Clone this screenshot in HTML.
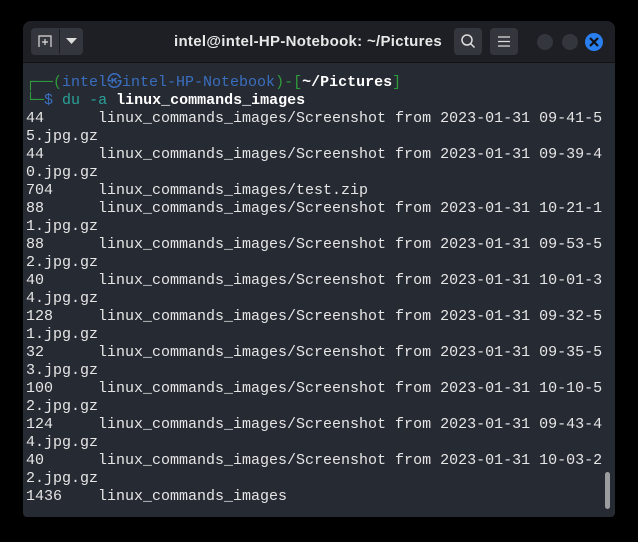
<!DOCTYPE html>
<html><head><style>
body{margin:0;width:638px;height:542px;background:#000;position:relative;overflow:hidden;font-family:"Liberation Sans",sans-serif}
.win{position:absolute;left:23px;top:21px;width:592px;height:496px;background:#262a33;border-radius:8px 8px 4px 4px;overflow:hidden}
.tb{position:absolute;left:0;top:0;width:592px;height:41px;background:#1d1f24;border-bottom:1px solid #111}
.btn{position:absolute;top:7px;height:27px;background:#33363d;border-radius:4px}
.title{position:absolute;left:151px;top:12px;color:#e8e8e8;font-weight:bold;font-size:15px;white-space:nowrap;letter-spacing:0.3px}
.dot{position:absolute;top:13px;width:16px;height:16px;border-radius:50%;background:#33363d}
pre{position:absolute;left:3px;top:53px;margin:0;font-family:"Liberation Mono",monospace;font-size:15px;line-height:18px;color:#e6e6e6}
.g{color:#2f9c3c}.b{color:#3a6fc0}.w{color:#fff;font-weight:bold}.t{color:#2aa198}
.sb{position:absolute;left:582px;top:451px;width:5px;height:37px;background:#9a9ca0;border-radius:3px}
</style></head><body>
<div class="win">
<div class="tb">
<div class="btn" style="left:8px;width:52px"></div>
<div style="position:absolute;left:36px;top:8px;width:1px;height:25px;background:#1d1f24"></div>
<svg style="position:absolute;left:15px;top:13px" width="16" height="14"><path d="M1 13V2h12v11" fill="none" stroke="#ddd" stroke-width="1.2"/><path d="M7 5v6M4 8h6" stroke="#ddd" stroke-width="1.2"/></svg>
<svg style="position:absolute;left:43px;top:17px" width="12" height="7"><path d="M0 0h11L5.5 6z" fill="#ddd"/></svg>
<div class="title">intel@intel-HP-Notebook: ~/Pictures</div>
<div class="btn" style="left:431px;width:28px"></div>
<svg style="position:absolute;left:437px;top:12px" width="16" height="16"><circle cx="7" cy="7" r="5" fill="none" stroke="#ddd" stroke-width="1.5"/><path d="M10.5 10.5l4 4" stroke="#ddd" stroke-width="1.5"/></svg>
<div class="btn" style="left:467px;width:28px"></div>
<svg style="position:absolute;left:475px;top:15px" width="12" height="11"><path d="M0 1h12M0 5.5h12M0 10h12" stroke="#ddd" stroke-width="1.3"/></svg>
<div class="dot" style="left:514px"></div>
<div class="dot" style="left:539px"></div>
<div class="dot" style="left:562px;background:#2a7ff0;width:18px;height:18px;top:12px"></div>
<svg style="position:absolute;left:566px;top:16px" width="10" height="10"><path d="M1 1l8 8M9 1l-8 8" stroke="#111" stroke-width="2.2"/></svg>
</div>
<pre><span class="g">┌──(</span><span class="b">intel㉿intel-HP-Notebook</span><span class="g">)-[</span><span class="w">~/Pictures</span><span class="g">]</span>
<span class="g">└─</span><span class="b">$</span> <span class="t">du</span> <span class="t">-a</span> <span class="w">linux_commands_images</span>
44      linux_commands_images/Screenshot from 2023-01-31 09-41-5
5.jpg.gz
44      linux_commands_images/Screenshot from 2023-01-31 09-39-4
0.jpg.gz
704     linux_commands_images/test.zip
88      linux_commands_images/Screenshot from 2023-01-31 10-21-1
1.jpg.gz
88      linux_commands_images/Screenshot from 2023-01-31 09-53-5
2.jpg.gz
40      linux_commands_images/Screenshot from 2023-01-31 10-01-3
4.jpg.gz
128     linux_commands_images/Screenshot from 2023-01-31 09-32-5
1.jpg.gz
32      linux_commands_images/Screenshot from 2023-01-31 09-35-5
3.jpg.gz
100     linux_commands_images/Screenshot from 2023-01-31 10-10-5
2.jpg.gz
124     linux_commands_images/Screenshot from 2023-01-31 09-43-4
4.jpg.gz
40      linux_commands_images/Screenshot from 2023-01-31 10-03-2
2.jpg.gz
1436    linux_commands_images</pre>
<div class="sb"></div>
</div>
</body></html>
